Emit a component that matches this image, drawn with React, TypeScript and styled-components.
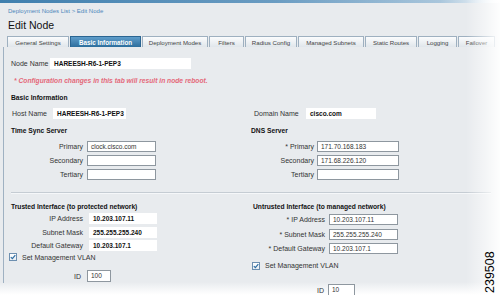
import React from "react";
import styled, { createGlobalStyle } from "styled-components";

const GlobalStyle = createGlobalStyle`
  html, body { margin: 0; padding: 0; background: #ffffff; }
  body { font-family: "Liberation Sans", Arial, sans-serif; }
`;

const Page = styled.div`
  position: relative;
  width: 500px;
  height: 295px;
  overflow: hidden;
  background: linear-gradient(#e8ebee 0px, #e8ebee 282px, #f7f8f9 290px, #ffffff 295px);
  color: #333;
`;

const TopBar = styled.div`
  height: 3px;
  background: linear-gradient(90deg, #3f7fae 0%, #6a9cc2 55%, #a9c6dc 88%, #ffffff 100%);
`;

const Header = styled.div`
  padding: 5px 0 0 8px;
  height: 33px;
  box-sizing: border-box;
`;

const Crumb = styled.div`
  font-size: 6px;
  line-height: 7px;
  color: #4d87bb;
`;

const Title = styled.div`
  font-size: 10.5px;
  line-height: 12px;
  margin-top: 4px;
  color: #111;
`;

const Tabs = styled.div`
  display: flex;
  gap: 1px;
  margin-left: 7px;
  height: 11px;
`;

const Tab = styled.div<{ $w: number; $active?: boolean }>`
  width: ${(p) => p.$w}px;
  box-sizing: border-box;
  display: flex;
  align-items: center;
  justify-content: center;
  font-size: ${(p) => (p.$active ? "6.3px" : "6.1px")};
  font-weight: ${(p) => (p.$active ? "bold" : "normal")};
  color: ${(p) => (p.$active ? "#ffffff" : "#444")};
  border: 1px solid ${(p) => (p.$active ? "#2a6592" : "#9eb0c0")};
  border-bottom: none;
  background: ${(p) =>
    p.$active
      ? "linear-gradient(#5f9dca, #2c6e9d)"
      : "linear-gradient(#fbfcfd, #e0e6eb)"};
`;

const Panel = styled.div`
  margin-left: 3px;
  border-left: 1px solid #9fb1c2;
  padding: 11px 0 0 7px;
  height: 236px;
  box-sizing: border-box;
`;

const Label = styled.span<{ $w?: number; $right?: boolean }>`
  display: inline-block;
  font-size: 7px;
  color: #333;
  width: ${(p) => (p.$w ? `${p.$w}px` : "auto")};
  text-align: ${(p) => (p.$right ? "right" : "left")};
  white-space: nowrap;
`;

const Row = styled.div<{ $gap?: number; $mt?: number; $h?: number }>`
  display: flex;
  align-items: center;
  height: ${(p) => p.$h ?? 11}px;
  gap: ${(p) => p.$gap ?? 4}px;
  margin-top: ${(p) => p.$mt ?? 0}px;
`;

const Value = styled.div<{ $w: number }>`
  width: ${(p) => p.$w}px;
  height: 11px;
  box-sizing: border-box;
  background: #ffffff;
  padding-left: 4px;
  font-size: 6.5px;
  font-weight: bold;
  line-height: 11px;
  color: #111;
  white-space: nowrap;
`;

const Input = styled.div<{ $w: number; $h?: number }>`
  width: ${(p) => p.$w}px;
  height: ${(p) => p.$h ?? 11}px;
  box-sizing: border-box;
  background: #ffffff;
  border: 1px solid #8e979f;
  padding-left: 3px;
  font-size: 6.5px;
  line-height: ${(p) => (p.$h ?? 11) - 2}px;
  color: #333;
  white-space: nowrap;
`;

const Note = styled.div`
  margin-top: 7px;
  margin-left: 3px;
  font-size: 6.7px;
  line-height: 10px;
  font-style: italic;
  font-weight: bold;
  color: #e4697a;
`;

const Heading = styled.div<{ $mt?: number; $ml?: number }>`
  font-size: 6.7px;
  line-height: 10px;
  font-weight: bold;
  color: #111;
  margin-top: ${(p) => p.$mt ?? 0}px;
  margin-left: ${(p) => p.$ml ?? 0}px;
  white-space: nowrap;
`;

const Grid = styled.div`
  display: grid;
  grid-template-columns: 240px 240px;
`;

const Column = styled.div`
  display: flex;
  flex-direction: column;
`;

const Stack = styled.div<{ $gap: number; $mt?: number }>`
  display: flex;
  flex-direction: column;
  gap: ${(p) => p.$gap}px;
  margin-top: ${(p) => p.$mt ?? 0}px;
`;

const Divider = styled.div`
  height: 1px;
  margin-top: 12px;
  width: 480px;
  background: #c5ccd3;
  border-bottom: 1px solid #f5f7f9;
`;

const CheckRow = styled.div<{ $mt: number; $ml: number }>`
  display: flex;
  align-items: center;
  gap: 5px;
  height: 9px;
  margin-top: ${(p) => p.$mt}px;
  margin-left: ${(p) => p.$ml}px;
`;

const Box = styled.span`
  width: 8px;
  height: 8px;
  box-sizing: border-box;
  border: 1px solid #6d8fb0;
  background: linear-gradient(#ffffff, #e6edf3);
  display: flex;
  align-items: center;
  justify-content: center;
`;

const FadeRight = styled.div`
  position: absolute;
  top: 0;
  right: 0;
  width: 34px;
  height: 295px;
  background: linear-gradient(90deg, rgba(255, 255, 255, 0) 0%, rgba(255, 255, 255, 0.55) 60%, rgba(255, 255, 255, 0.95) 100%);
  pointer-events: none;
`;

const FigId = styled.div`
  position: absolute;
  left: 484px;
  top: 293px;
  transform: rotate(-90deg);
  transform-origin: 0 0;
  font-size: 12.5px;
  line-height: 13px;
  color: #000;
  font-family: "Liberation Sans", Arial, sans-serif;
`;

const tabs: Array<[string, number]> = [
  ["General Settings", 62],
  ["Basic Information", 71],
  ["Deployment Modes", 66],
  ["Filters", 35],
  ["Radius Config", 52],
  ["Managed Subnets", 66],
  ["Static Routes", 52],
  ["Logging", 39],
  ["Failover", 37],
];

const Check = () => (
  <Box>
    <svg width="6" height="6" viewBox="0 0 6 6">
      <path d="M0.8 3.1 L2.4 4.7 L5.3 1.2" stroke="#2f6ea3" strokeWidth="1.2" fill="none" />
    </svg>
  </Box>
);

const App: React.FC = () => {
  return (
    <Page>
      <GlobalStyle />
      <TopBar />
      <Header>
        <Crumb>Deployment Nodes List &gt; Edit Node</Crumb>
        <Title>Edit Node</Title>
      </Header>
      <Tabs>
        {tabs.map(([name, w]) => (
          <Tab key={name} $w={w} $active={name === "Basic Information"}>
            {name}
          </Tab>
        ))}
      </Tabs>
      <Panel>
        <Row $gap={3}>
          <Label $w={36}>Node Name</Label>
          <Value $w={141}>HAREESH-R6-1-PEP3</Value>
        </Row>
        <Note>* Configuration changes in this tab will result in node reboot.</Note>
        <Heading $mt={7}>Basic Information</Heading>
        <Grid>
          <Column>
            <Row $mt={5} $gap={5}>
              <Label $w={36} style={{ paddingLeft: 1 }}>Host Name</Label>
              <Value $w={73}>HAREESH-R6-1-PEP3</Value>
            </Row>
            <Heading $mt={7}>Time Sync Server</Heading>
            <Stack $gap={3} $mt={5}>
              <Row>
                <Label $w={72} $right>Primary</Label>
                <Input $w={69}>clock.cisco.com</Input>
              </Row>
              <Row>
                <Label $w={72} $right>Secondary</Label>
                <Input $w={69} />
              </Row>
              <Row>
                <Label $w={72} $right>Tertiary</Label>
                <Input $w={69} />
              </Row>
            </Stack>
          </Column>
          <Column>
            <Row $mt={5} $gap={4}>
              <Label $w={48} style={{ paddingLeft: 3 }}>Domain Name</Label>
              <Value $w={70}>cisco.com</Value>
            </Row>
            <Heading $mt={7}>DNS Server</Heading>
            <Stack $gap={3} $mt={5}>
              <Row $gap={3}>
                <Label $w={63} $right>* Primary</Label>
                <Input $w={82}>171.70.168.183</Input>
              </Row>
              <Row $gap={3}>
                <Label $w={63} $right>Secondary</Label>
                <Input $w={82}>171.68.226.120</Input>
              </Row>
              <Row $gap={3}>
                <Label $w={63} $right>Tertiary</Label>
                <Input $w={82} />
              </Row>
            </Stack>
          </Column>
        </Grid>
        <Divider />
        <Grid>
          <Column>
            <Heading $mt={8}>Trusted Interface (to protected network)</Heading>
            <Stack $gap={2.5} $mt={1}>
              <Row $gap={6}>
                <Label $w={72} $right>IP Address</Label>
                <Value $w={68}>10.203.107.11</Value>
              </Row>
              <Row $gap={6}>
                <Label $w={72} $right>Subnet Mask</Label>
                <Value $w={68}>255.255.255.240</Value>
              </Row>
              <Row $gap={6}>
                <Label $w={72} $right>Default Gateway</Label>
                <Value $w={68}>10.203.107.1</Value>
              </Row>
            </Stack>
            <CheckRow $mt={1.5} $ml={-2}>
              <Check />
              <Label>Set Management VLAN</Label>
            </CheckRow>
            <Row $mt={8.5} $gap={6} $h={12}>
              <Label $w={70} $right>ID</Label>
              <Input $w={24} $h={12}>100</Input>
            </Row>
          </Column>
          <Column>
            <Heading $mt={8} $ml={2}>Untrusted Interface (to managed network)</Heading>
            <Stack $gap={3.5} $mt={2}>
              <Row $gap={4}>
                <Label $w={74} $right>* IP Address</Label>
                <Input $w={69}>10.203.107.11</Input>
              </Row>
              <Row $gap={4}>
                <Label $w={74} $right>* Subnet Mask</Label>
                <Input $w={69}>255.255.255.240</Input>
              </Row>
              <Row $gap={4}>
                <Label $w={74} $right>* Default Gateway</Label>
                <Input $w={69}>10.203.107.1</Input>
              </Row>
            </Stack>
            <CheckRow $mt={7} $ml={1}>
              <Check />
              <Label>Set Management VLAN</Label>
            </CheckRow>
            <Row $mt={14} $gap={4} $h={12}>
              <Label $w={73} $right>ID</Label>
              <Input $w={27} $h={12}>10</Input>
            </Row>
          </Column>
        </Grid>
      </Panel>
      <FadeRight />
      <FigId>239508</FigId>
    </Page>
  );
};

export default App;
